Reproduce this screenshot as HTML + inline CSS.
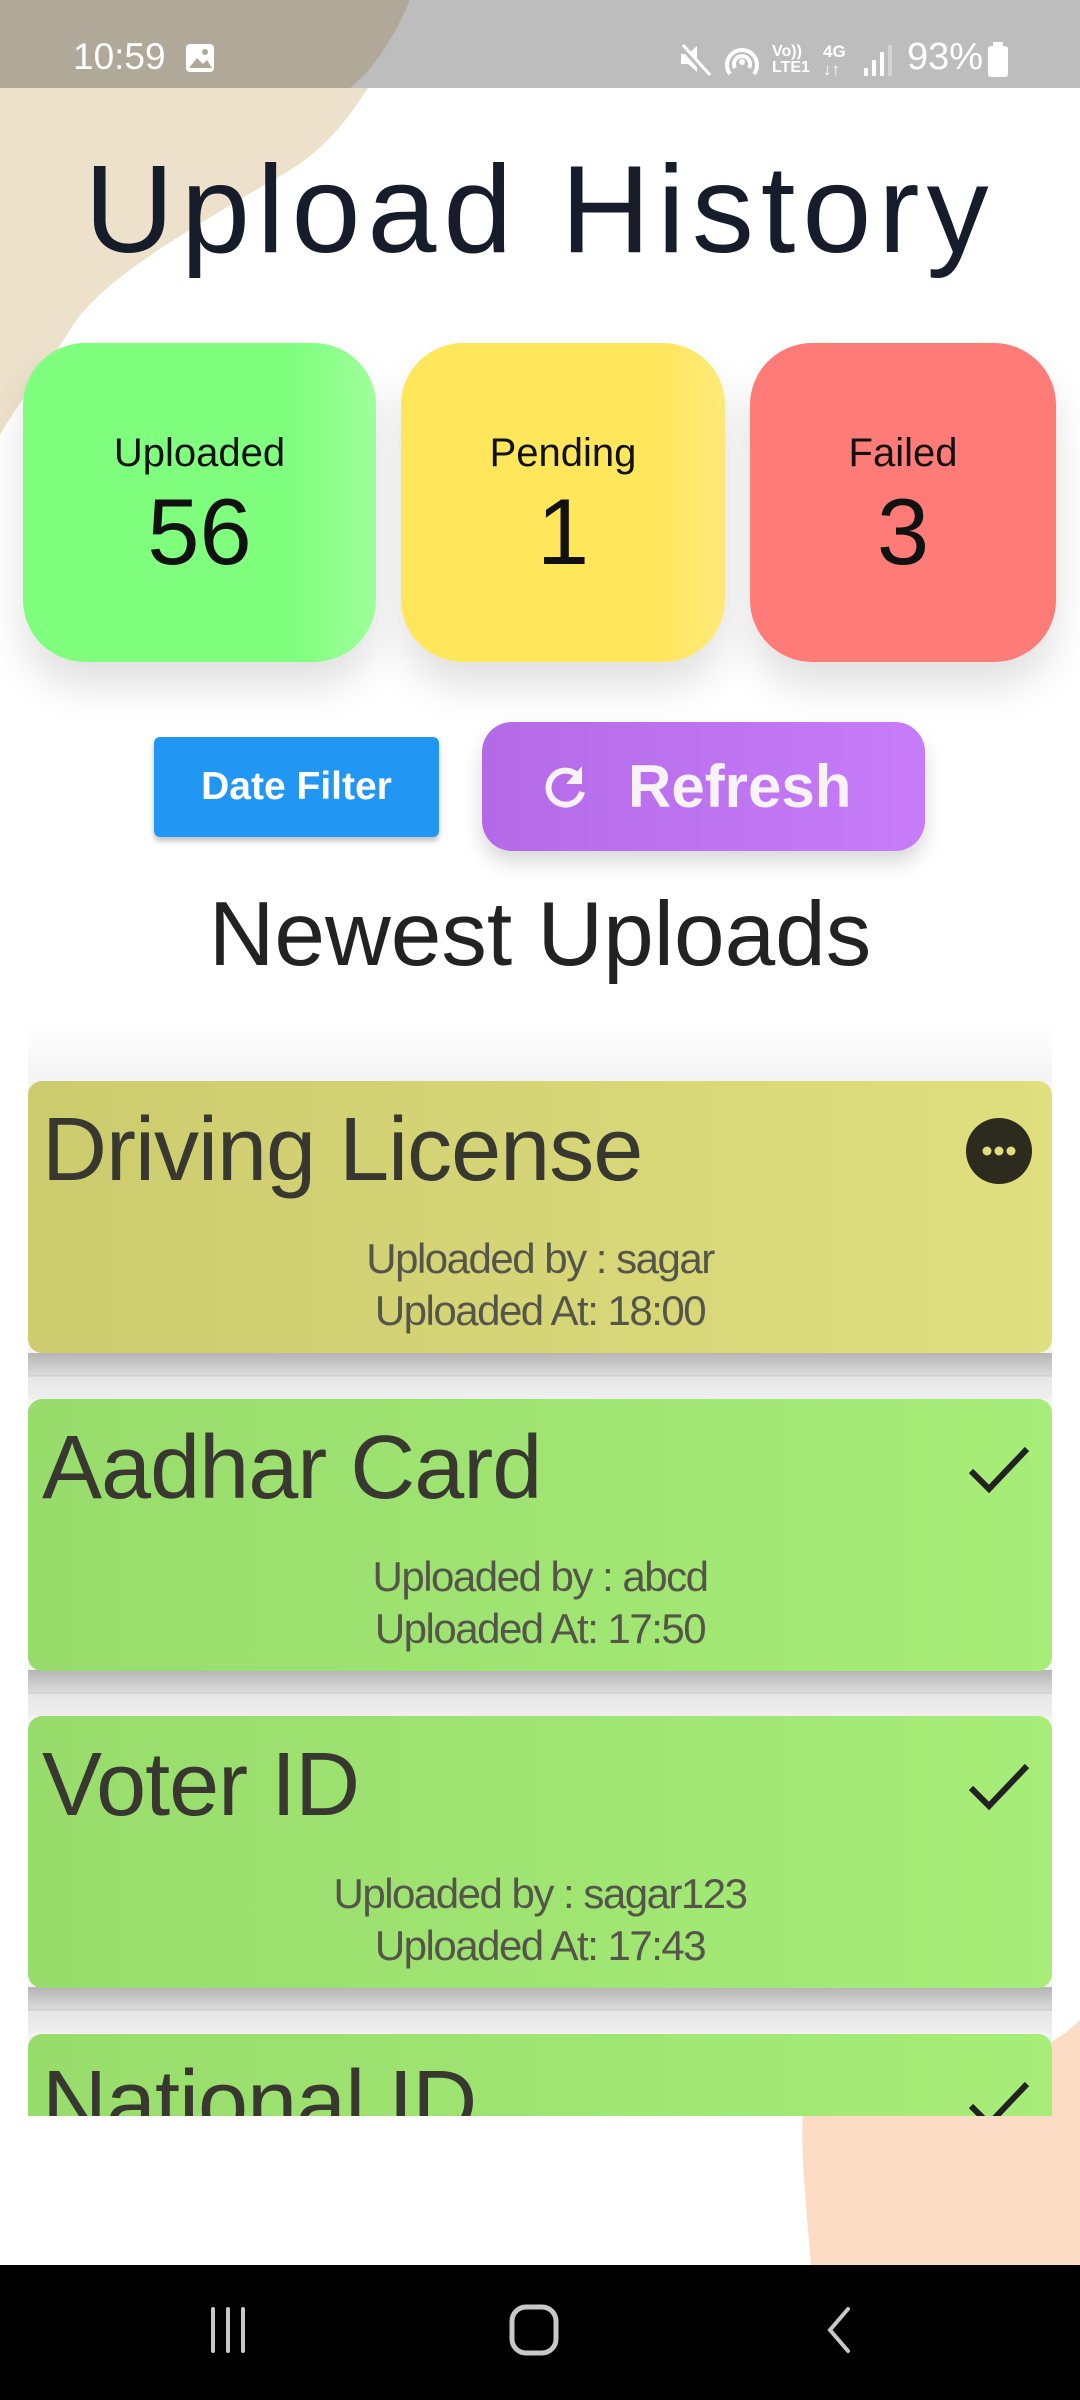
<!DOCTYPE html>
<html><head><meta charset="utf-8"><style>
*{margin:0;padding:0;box-sizing:border-box}
body{width:1080px;height:2400px;position:relative;overflow:hidden;background:#fff;font-family:"Liberation Sans",sans-serif}
.abs{position:absolute}
.stat{position:absolute;top:343px;height:319px;border-radius:62px;text-align:center;box-shadow:0 25px 40px rgba(0,0,0,.12);color:#111}
.stat .l{position:absolute;left:0;right:0;top:88px;font-size:40px}
.stat .n{position:absolute;left:0;right:0;top:135px;font-size:94px}
.card{position:absolute;left:28px;width:1024px;height:272px;border-radius:14px}
.card .t{position:absolute;left:14px;top:18px;font-size:90px;color:#383830;letter-spacing:-1px}
.card .s{position:absolute;left:0;right:0;top:152px;text-align:center;font-size:42px;line-height:52px;color:#55554a;letter-spacing:-1.5px}
.y{background:linear-gradient(90deg,#cccb6e,#dfdf7f)}
.g{background:linear-gradient(90deg,#98dc6c,#a7ed78)}
.sep{position:absolute;left:28px;width:1024px;height:46px;background:linear-gradient(180deg,#b5b5b5 0%,#dadada 48%,#c4c4c4 50%,#e6e6e6 52%,#efefef 100%)}
.chk{position:absolute;right:22px;top:46px}
</style></head><body>
<svg class="abs" style="left:0;top:0" width="420" height="440"><path d="M0 0 L410 0 C380 80 340 140 290 170 C180 235 100 280 70 330 C45 370 20 400 0 435 Z" fill="#ede1cb"/></svg>
<svg class="abs" style="left:780px;top:2020px" width="300" height="260"><path d="M300 0 L300 260 L32 260 C28 200 20 140 23 90 C40 60 80 60 140 55 C200 50 260 40 300 0 Z" fill="#fcdcc4"/></svg>
<div class="abs" style="left:0;top:0;width:1080px;height:88px;background:#bdbdbd"></div>
<svg class="abs" style="left:0;top:0" width="420" height="88"><path d="M0 0 L410 0 C395 35 375 68 350 88 L0 88 Z" fill="#b0a898"/></svg>
<div class="abs" style="left:73px;top:36px;font-size:37px;color:#fff">10:59</div>
<svg class="abs" style="left:185px;top:43px" width="30" height="30"><rect x="1" y="1" width="28" height="28" rx="4" fill="#fff"/><path d="M4 25 L12 15 L18 21 L22 17 L27 25 Z" fill="#b0a898"/><circle cx="20" cy="9" r="3" fill="#b0a898"/></svg>
<svg class="abs" style="left:678px;top:42px" width="36" height="36"><path d="M3 12 H10 L19 4 V30 L10 22 H3 Z" fill="#fff"/><path d="M3 3 L30 33" stroke="#bdbdbd" stroke-width="6"/><path d="M5 3 L32 33" stroke="#fff" stroke-width="3"/></svg>
<svg class="abs" style="left:722px;top:42px" width="40" height="36"><path d="M8 32 A15 15 0 1 1 32 32" fill="none" stroke="#fff" stroke-width="4"/><path d="M13 26 A8 8 0 1 1 27 26" fill="none" stroke="#fff" stroke-width="4"/><circle cx="20" cy="20" r="3" fill="#fff"/></svg>
<div class="abs" style="left:772px;top:44px;font-size:16px;color:#fff;font-weight:bold;line-height:16px">Vo))<br>LTE1</div>
<div class="abs" style="left:823px;top:43px;font-size:17px;color:#fff;font-weight:bold;line-height:18px">4G<br>↓↑</div>
<svg class="abs" style="left:862px;top:44px" width="32" height="34"><rect x="2" y="24" width="4" height="8" fill="#fff"/><rect x="10" y="16" width="4" height="16" fill="#fff"/><rect x="18" y="8" width="4" height="24" fill="#fff"/><rect x="26" y="1" width="4" height="31" fill="#d4d4d4"/></svg>
<div class="abs" style="left:907px;top:36px;font-size:38px;color:#fff">93%</div>
<svg class="abs" style="left:987px;top:42px" width="22" height="36"><rect x="6" y="0" width="10" height="5" fill="#fff"/><rect x="1" y="4" width="20" height="31" rx="3" fill="#fff"/></svg>
<div class="abs" style="left:0;width:1080px;top:140px;text-align:center;font-size:124px;letter-spacing:7px;color:#161c2a;line-height:140px">Upload History</div>
<div class="stat" style="left:23px;width:353px;background:linear-gradient(90deg,#80ff7f 78%,#a0ff9c)"><div class="l">Uploaded</div><div class="n">56</div></div>
<div class="stat" style="left:401px;width:324px;background:linear-gradient(90deg,#ffe65a 78%,#ffe97a)"><div class="l">Pending</div><div class="n">1</div></div>
<div class="stat" style="left:750px;width:306px;background:#ff7b78"><div class="l">Failed</div><div class="n">3</div></div>
<div class="abs" style="left:154px;top:737px;width:285px;height:100px;background:#2196f3;border-radius:6px;box-shadow:0 4px 6px rgba(0,0,0,.25);color:#fff;font-weight:bold;font-size:39px;text-align:center;line-height:100px">Date Filter</div>
<div class="abs" style="left:482px;top:722px;width:443px;height:129px;border-radius:30px;background:linear-gradient(90deg,#b46ae6,#c77cf9);box-shadow:0 12px 20px rgba(0,0,0,.15);color:#f8f3f8;font-weight:bold;font-size:60px;line-height:129px">
<svg class="abs" style="left:58px;top:40px" width="50" height="50" viewBox="0 0 50 50"><path d="M38 14 A17 17 0 1 0 42 30" fill="none" stroke="#f8f3f8" stroke-width="6"/><path d="M42 4 V22 H26 Z" fill="#f8f3f8"/></svg>
<span class="abs" style="left:146px;top:0">Refresh</span></div>
<div class="abs" style="left:0;width:1080px;top:880px;text-align:center;font-size:91px;color:#222;line-height:110px">Newest Uploads</div>
<div class="abs" style="left:28px;top:1020px;width:1024px;height:1096px;background:linear-gradient(180deg,#fff 0,#f4f4f4 60px,#f4f4f4 100%)"></div>
<div class="abs" style="left:0;top:0;width:1080px;height:2116px;overflow:hidden">
<div class="sep" style="top:1353px"></div>
<div class="sep" style="top:1670px"></div>
<div class="sep" style="top:1987px"></div>
<div class="card y" style="top:1081px"><div class="t">Driving License</div><div class="s">Uploaded by : sagar<br>Uploaded At: 18:00</div>
<svg class="abs" style="right:20px;top:37px" width="66" height="66"><circle cx="33" cy="33" r="33" fill="#2d2a1e"/><circle cx="21" cy="33" r="4.5" fill="#dede7e"/><circle cx="33" cy="33" r="4.5" fill="#dede7e"/><circle cx="45" cy="33" r="4.5" fill="#dede7e"/></svg></div>
<div class="card g" style="top:1399px"><div class="t">Aadhar Card</div><div class="s">Uploaded by : abcd<br>Uploaded At: 17:50</div>
<svg class="chk" width="62" height="50"><path d="M3 26 L21 44 L59 4" fill="none" stroke="#222" stroke-width="6"/></svg></div>
<div class="card g" style="top:1716px"><div class="t">Voter ID</div><div class="s">Uploaded by : sagar123<br>Uploaded At: 17:43</div>
<svg class="chk" width="62" height="50"><path d="M3 26 L21 44 L59 4" fill="none" stroke="#222" stroke-width="6"/></svg></div>
<div class="card g" style="top:2034px"><div class="t">National ID</div>
<svg class="chk" width="62" height="50"><path d="M3 26 L21 44 L59 4" fill="none" stroke="#222" stroke-width="6"/></svg></div>
</div>
<div class="abs" style="left:0;top:2265px;width:1080px;height:135px;background:#000"></div>
<svg class="abs" style="left:205px;top:2305px" width="60" height="50"><path d="M8 4 V46 M23 4 V46 M38 4 V46" stroke="#c8c8c8" stroke-width="4" stroke-linecap="round"/></svg>
<svg class="abs" style="left:505px;top:2302px" width="60" height="56"><rect x="7" y="5" width="44" height="46" rx="14" fill="none" stroke="#c8c8c8" stroke-width="5"/></svg>
<svg class="abs" style="left:818px;top:2305px" width="40" height="50"><path d="M30 4 L12 25 L30 46" fill="none" stroke="#c8c8c8" stroke-width="4" stroke-linecap="round"/></svg>
</body></html>
